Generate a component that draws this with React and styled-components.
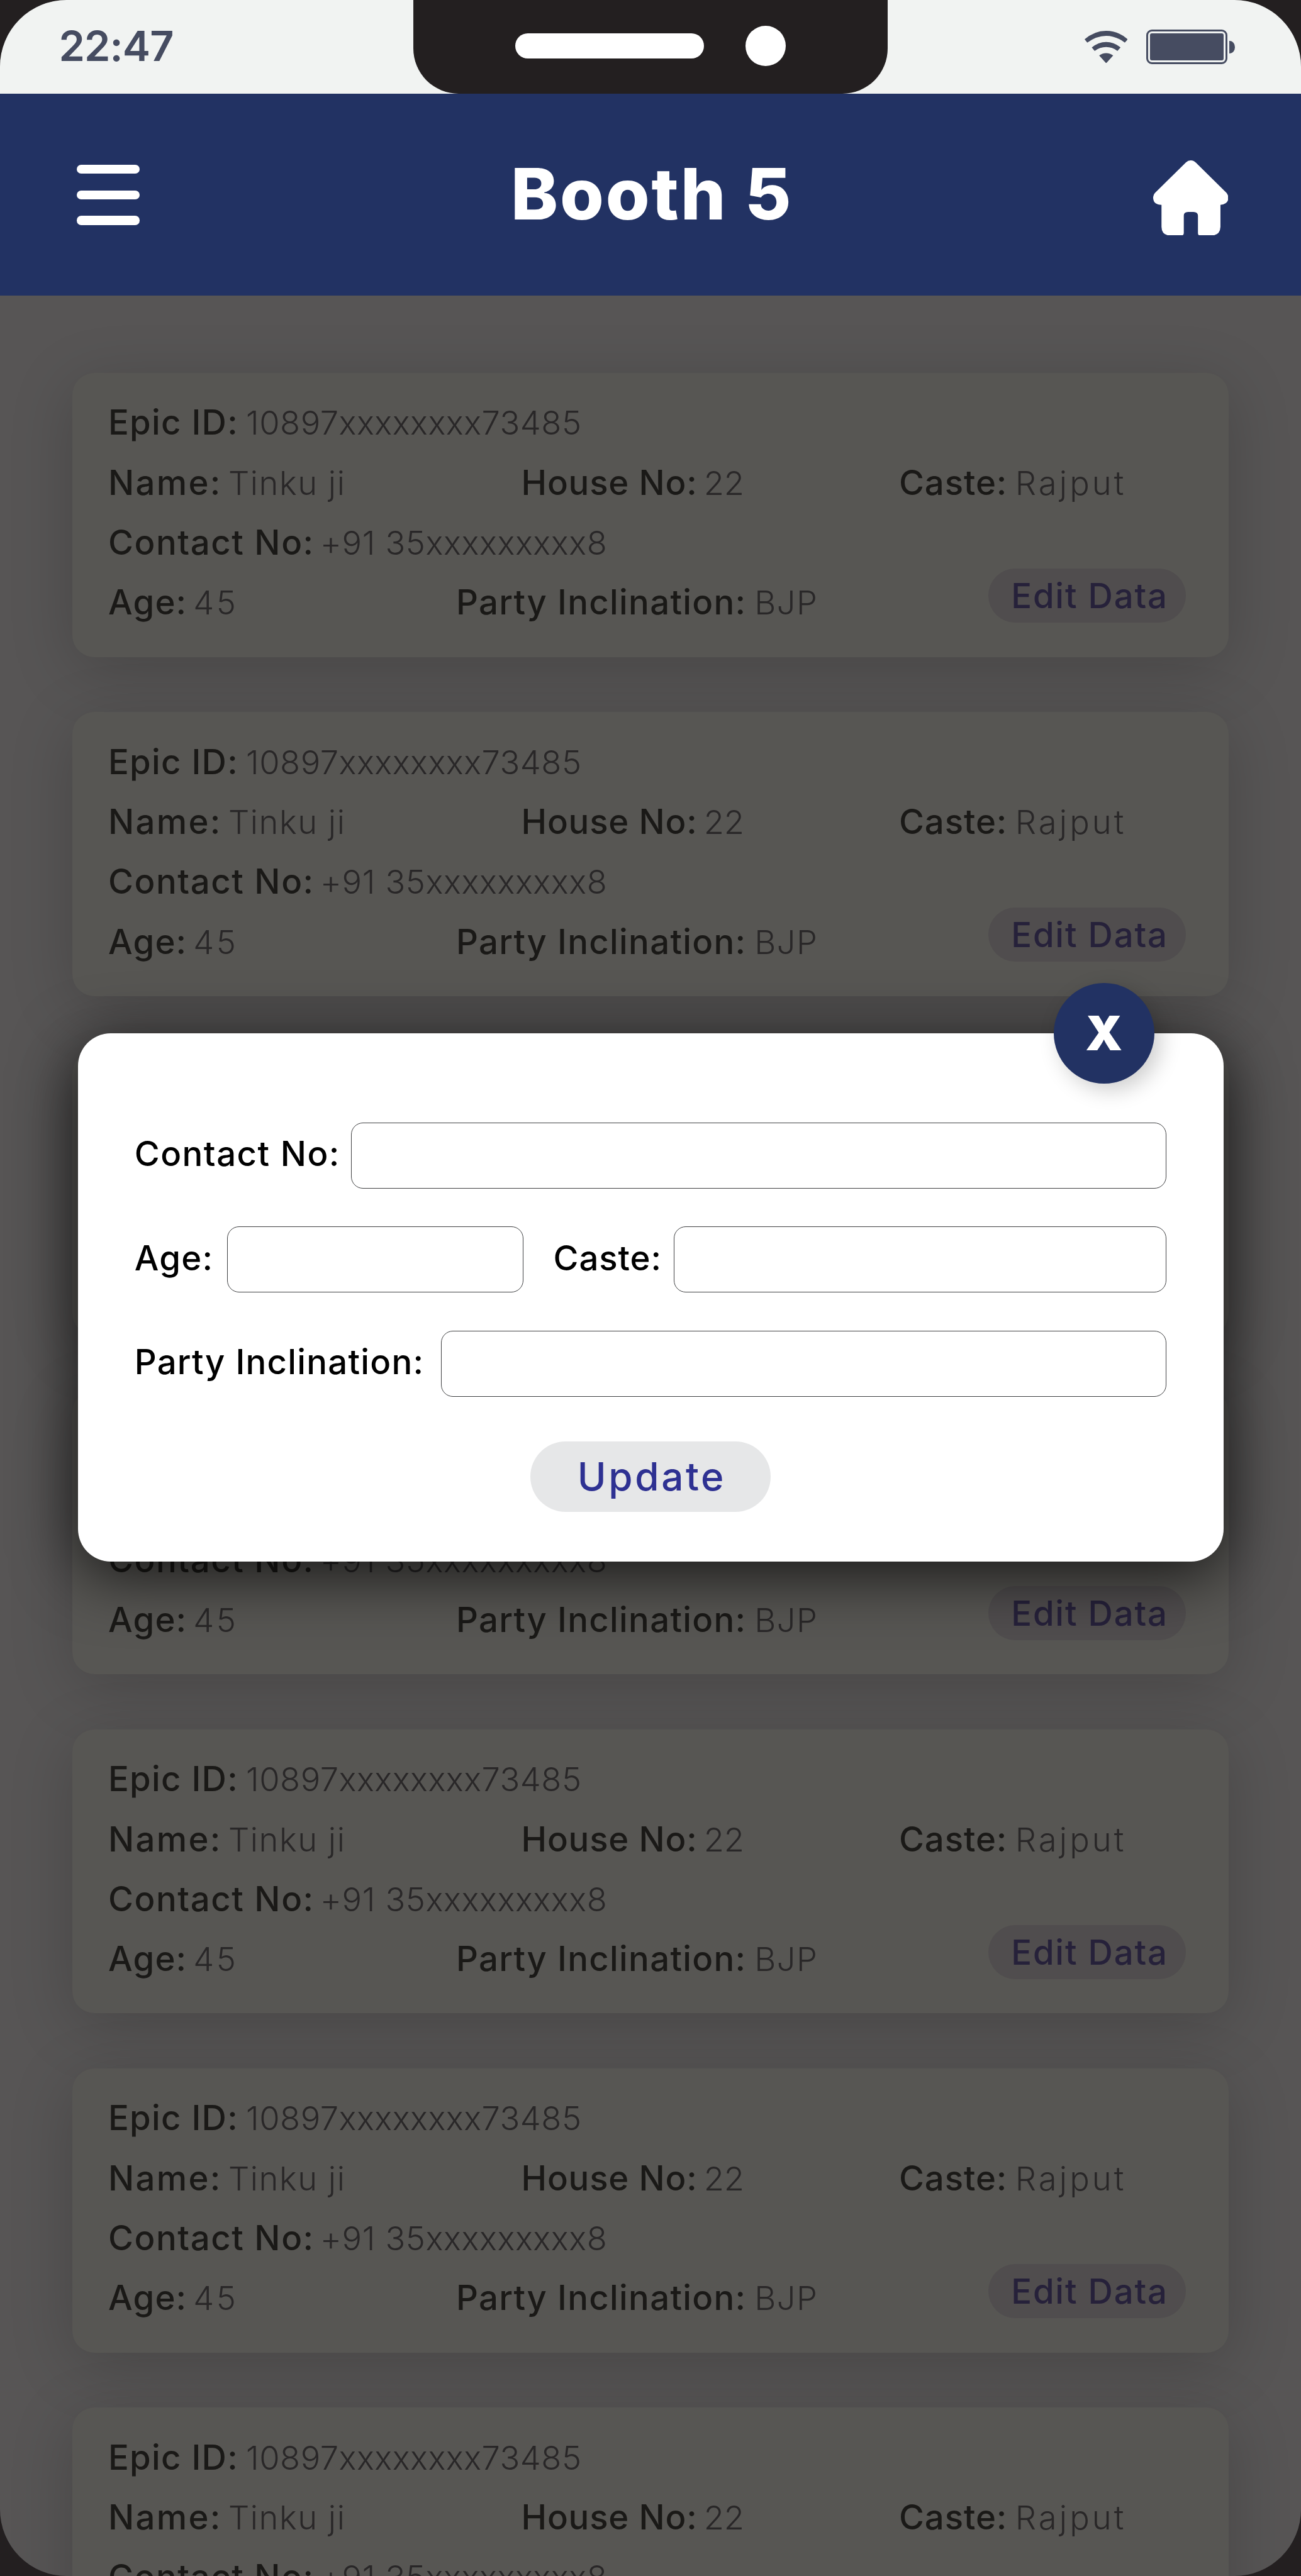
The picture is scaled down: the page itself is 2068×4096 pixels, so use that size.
import React from 'react';
import styled, { createGlobalStyle } from 'styled-components';

const GlobalStyle = createGlobalStyle`
  *, *::before, *::after { box-sizing: border-box; }
  body {
    margin: 0;
    background: #231f20;
    font-family: Inter, "Liberation Sans", sans-serif;
    font-feature-settings: "calt" 0;
  }
  button, input { font: inherit; font-feature-settings: inherit; }
`;

const Phone = styled.div`
  position: relative;
  display: flex;
  flex-direction: column;
  width: 2068px;
  height: 4096px;
  overflow: hidden;
  border-radius: 106px;
  background: #575555;
`;

/* ---------- status bar ---------- */

const StatusBar = styled.div`
  flex: none;
  display: grid;
  grid-template-columns: 657px 754px 1fr;
  height: 149.3px;
  background: #f1f3f2;
  color: #464c61;
`;

const Clock = styled.div`
  display: flex;
  align-items: center;
  padding: 0 0 4px 93.5px;
  font-size: 66.5px;
  font-weight: 600;
  letter-spacing: -0.9px;
`;

const Notch = styled.div`
  display: flex;
  align-items: center;
  gap: 66px;
  padding: 0 0 4px 162px;
  border-radius: 0 0 72px 72px;
  background: #231f20;
`;

const Speaker = styled.span`
  width: 300px;
  height: 40px;
  border-radius: 20px;
  background: #fff;
`;

const Camera = styled.span`
  width: 64px;
  height: 64px;
  border-radius: 50%;
  background: #fff;
`;

const StatusIcons = styled.div`
  display: flex;
  align-items: center;
  justify-content: flex-end;
  padding-right: 105.5px;
`;

const WifiIcon = styled.svg`
  width: 68.6px;
  height: 51.6px;
  margin-right: 29.8px;
  fill: currentColor;
`;

const Battery = styled.span`
  width: 129px;
  height: 54.4px;
  padding: 2.7px;
  border: 3px solid currentColor;
  border-radius: 9px;

  &::before {
    content: "";
    display: block;
    height: 100%;
    border-radius: 3px;
    background: currentColor;
  }
`;

const BatteryTip = styled.span`
  width: 9px;
  height: 20px;
  margin-left: 2.6px;
  border-radius: 0 8px 8px 0 / 0 10px 10px 0;
  background: currentColor;
`;

/* ---------- header ---------- */

const Header = styled.header`
  flex: none;
  display: grid;
  grid-template-columns: 690px 1fr auto;
  align-items: center;
  height: 321.2px;
  padding: 0 115.6px 0 122px;
  background: #223263;
  color: #fff;
`;

const MenuButton = styled.button`
  display: flex;
  flex-direction: column;
  justify-content: space-between;
  width: 99.6px;
  height: 96px;
  padding: 0;
  border: 0;
  background: none;
`;

const MenuBar = styled.span`
  height: 14.4px;
  border-radius: 7.2px;
  background: #fff;
`;

const Title = styled.h1`
  margin: 0;
  padding-bottom: 4px;
  font-size: 113px;
  font-weight: 800;
  line-height: 132px;
  letter-spacing: 2.8px;
`;

const HomeIcon = styled.svg`
  width: 119.6px;
  height: 119.6px;
  margin-top: 9px;
  fill: currentColor;
`;

/* ---------- voter cards ---------- */

const VoterList = styled.main`
  flex: none;
  display: flex;
  flex-direction: column;
  gap: 87.8px;
  padding: 122.8px 115px 0;
`;

const Card = styled.article`
  flex: none;
  height: 451.4px;
  padding: 31.2px 68.4px 0 57px;
  border-radius: 35px;
  background: #575653;
  box-shadow: 0 20px 100px rgba(0, 0, 0, 0.18);
  font-size: 52.5px;
  line-height: 95.3px;
`;

const Row = styled.div`
  display: grid;
  grid-template-columns: ${(p) => p.$columns || '1fr'};
  height: 95.3px;
  white-space: nowrap;
`;

const Label = styled.span`
  color: #1a1917;
  font-size: 54.5px;
  font-weight: 500;
  letter-spacing: ${(p) => p.$track}px;
`;

const Value = styled.span`
  margin-left: ${(p) => p.$gap}px;
  color: #292728;
  font-weight: 300;
  letter-spacing: ${(p) => p.$track}px;
`;

const EditButton = styled.button`
  width: 313.4px;
  height: 86px;
  margin-top: -6.4px;
  padding: 0 0 0 36px;
  border: 0;
  border-radius: 43px;
  background: #504d4e;
  color: #26213a;
  font-size: 54.5px;
  font-weight: 500;
  line-height: 86px;
  letter-spacing: 1.8px;
  text-align: left;
`;

/* ---------- edit dialog ---------- */

const Dialog = styled.form`
  position: absolute;
  top: 1642.6px;
  left: 123.7px;
  display: flex;
  flex-direction: column;
  gap: 60.4px;
  width: 1821px;
  height: 840.4px;
  padding: 142.2px 91px 0 90px;
  border-radius: 52px;
  background: #fff;
  box-shadow: 0 20px 100px rgba(0, 0, 0, 0.75);
  color: #000;
  font-size: 54.5px;
`;

const FieldRow = styled.div`
  display: flex;
  align-items: center;
  height: 105px;
`;

const FieldLabel = styled.label`
  flex: none;
  width: ${(p) => p.$width}px;
  padding-bottom: 6px;
  font-weight: 500;
  letter-spacing: ${(p) => p.$track}px;
  white-space: nowrap;
`;

const Field = styled.input`
  flex: ${(p) => (p.$width ? 'none' : '1')};
  width: ${(p) => (p.$width ? `${p.$width}px` : 'auto')};
  min-width: 0;
  height: 105px;
  margin-right: ${(p) => p.$after || 0}px;
  padding: 0 24px;
  border: 1px solid #404143;
  border-radius: 19px;
  background: #fff;
  outline: none;
`;

const UpdateButton = styled.button`
  align-self: flex-start;
  width: 382px;
  height: 112px;
  margin: 11px 0 0 629.5px;
  padding: 0 0 0 74.6px;
  border: 0;
  border-radius: 56px;
  background: #e6e7e8;
  color: #2e3192;
  font-size: 62px;
  font-weight: 500;
  letter-spacing: 3.6px;
  text-align: left;
`;

const CloseButton = styled.button`
  position: absolute;
  top: -80px;
  right: 110px;
  width: 160px;
  height: 160px;
  padding: 0;
  border: 0;
  border-radius: 50%;
  background: #223263;
  box-shadow: 10px 10px 34px rgba(0, 0, 0, 0.2);
  color: #fff;
  font-size: 75px;
  font-weight: 900;
`;

const voter = {
  epic: '10897xxxxxxxx73485',
  name: 'Tinku ji',
  house: '22',
  caste: 'Rajput',
  contact: '+91 35xxxxxxxxx8',
  age: '45',
  party: 'BJP',
};

const voters = Array.from({ length: 7 }, (_, i) => ({ id: i, ...voter }));

function Fact({ label, value, labelTrack, valueTrack, gap }) {
  return (
    <div>
      <Label $track={labelTrack}>{label}</Label>
      <Value $track={valueTrack} $gap={gap}>{value}</Value>
    </div>
  );
}

function VoterCard({ v }) {
  return (
    <Card>
      <Row>
        <Fact label="Epic ID:" value={v.epic} labelTrack={1.25} valueTrack={0.5} gap={12} />
      </Row>
      <Row $columns="656.5px 600.5px 1fr">
        <Fact label="Name:" value={v.name} labelTrack={2.3} valueTrack={1.5} gap={10.3} />
        <Fact label="House No:" value={v.house} labelTrack={0.8} valueTrack={-0.2} gap={10.2} />
        <Fact label="Caste:" value={v.caste} labelTrack={0.9} valueTrack={4.1} gap={12.5} />
      </Row>
      <Row>
        <Fact label="Contact No:" value={v.contact} labelTrack={1.55} valueTrack={0.6} gap={9} />
      </Row>
      <Row $columns="553px 1fr auto">
        <Fact label="Age:" value={v.age} labelTrack={1.2} valueTrack={3.6} gap={9.8} />
        <Fact label="Party Inclination:" value={v.party} labelTrack={1.3} valueTrack={1.5} gap={12.7} />
        <EditButton type="button">Edit Data</EditButton>
      </Row>
    </Card>
  );
}

export default function App() {
  return (
    <>
      <GlobalStyle />
      <Phone>
        <StatusBar>
          <Clock>22:47</Clock>
          <Notch>
            <Speaker />
            <Camera />
          </Notch>
          <StatusIcons>
            <WifiIcon viewBox="0 0 222 163" preserveAspectRatio="none">
              <path d="M0 43Q50 0 111 0T222 43L207 59Q160 25 111 25T14 59Z" />
              <path d="M37 84Q70 56 111 56T185 84L169 101Q143 81 111 81T52 101Z" />
              <path d="M75 124Q90 112 111 112T147 124L111 163Z" />
            </WifiIcon>
            <Battery />
            <BatteryTip />
          </StatusIcons>
        </StatusBar>

        <Header>
          <MenuButton type="button" aria-label="Menu">
            <MenuBar />
            <MenuBar />
            <MenuBar />
          </MenuButton>
          <Title>Booth 5</Title>
          <HomeIcon viewBox="0 0 388 378" preserveAspectRatio="none">
            <path d="M169 10Q180 0 194 0T220 11L377 162Q388 173 388 190Q386 221 347 224V334Q345 375 303 378H244Q231 378 231 366V277Q230 260 208 259H180Q158 260 158 277V366Q157 378 145 378H86Q44 375 43 334V224Q2 223 0 190Q0 173 11 162Z" />
          </HomeIcon>
        </Header>

        <VoterList>
          {voters.map((v) => (
            <VoterCard key={v.id} v={v} />
          ))}
        </VoterList>

        <Dialog>
          <CloseButton type="button" aria-label="Close">X</CloseButton>
          <FieldRow>
            <FieldLabel $width={344.3} $track={1.5}>Contact No:</FieldLabel>
            <Field />
          </FieldRow>
          <FieldRow>
            <FieldLabel $width={146.9} $track={1.3}>Age:</FieldLabel>
            <Field $width={471} $after={48} />
            <FieldLabel $width={191.7} $track={0.9}>Caste:</FieldLabel>
            <Field />
          </FieldRow>
          <FieldRow>
            <FieldLabel $width={487.7} $track={1.25}>Party Inclination:</FieldLabel>
            <Field />
          </FieldRow>
          <UpdateButton type="button">Update</UpdateButton>
        </Dialog>
      </Phone>
    </>
  );
}
